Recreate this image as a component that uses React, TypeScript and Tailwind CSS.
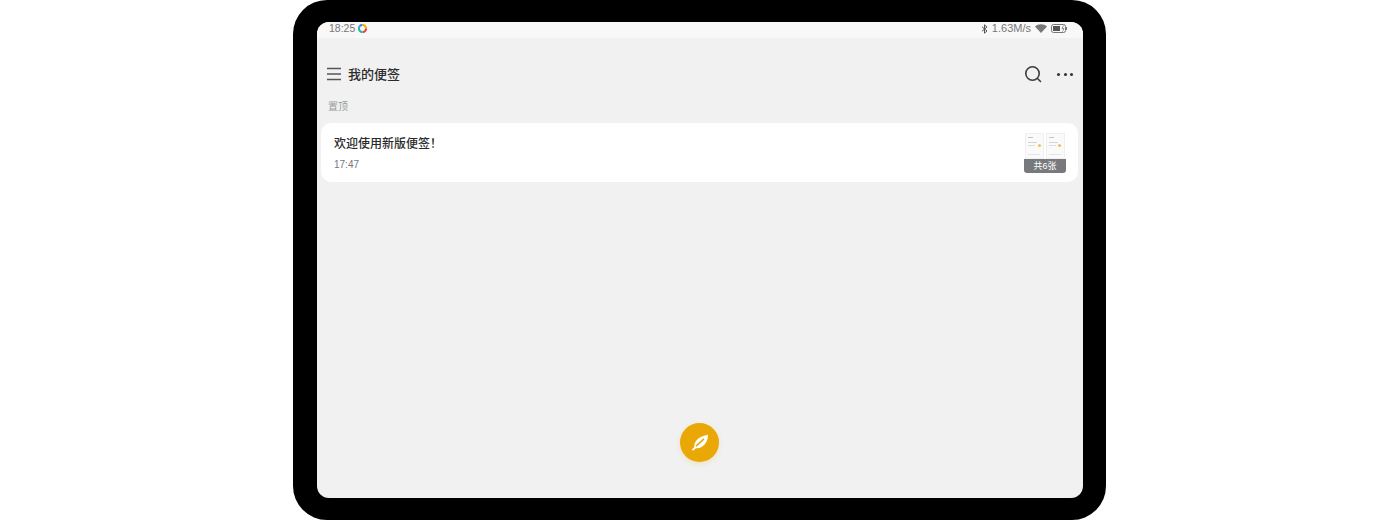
const cjk = "font-['Liberation_Sans','Noto_Sans_CJK_SC',sans-serif]";

const Thumb = ({ flip }: { flip?: boolean }) => (
  <div className="relative h-[26px] w-[19px] bg-[#fafafa] border border-[#f0f0f0]">
    <div className="absolute left-[2px] top-[3px] h-px w-[5px] bg-[#c4c4c4]" />
    <div className="absolute left-[2px] top-[8px] h-px w-[9px] bg-[#d4d4d4]" />
    <div className="absolute left-[2px] top-[11px] h-px w-[7px] bg-[#dcdcdc]" />
    <div className="absolute left-[2px] top-[20px] h-px w-[12px] bg-[#e4e4e4]" />
    <div className={`absolute top-[10px] h-[3px] w-[3px] rounded-full bg-[#e9c25f] ${flip ? "right-[3px]" : "right-[2px]"}`} />
  </div>
);

export default function App() {
  return (
    <div className={`flex h-[520px] w-full justify-start bg-white pl-[293px] ${cjk}`}>
      <div className="flex h-[520px] w-[813px] rounded-[34px] bg-black pb-[22px] pl-6 pr-[23px] pt-[22px]">
        <div className="relative flex flex-1 flex-col overflow-hidden rounded-xl bg-[#f1f1f1]">
          <div className="flex h-4 items-center justify-between bg-[#f8f8f8] pb-[3px] pl-3 pr-[14px] text-[10.5px] text-[#777]">
            <div className="flex items-center gap-[3px]">
              <span>18:25</span>
              <svg width="9" height="9" viewBox="0 0 10 10" fill="none" strokeWidth="2.4">
                <path d="M2 2.4A4 4 0 0 1 5 1" stroke="#3b82f6" />
                <path d="M5 1a4 4 0 0 1 4 4" stroke="#f4b400" />
                <path d="M9 5a4 4 0 0 1-4 4" stroke="#ea4335" />
                <path d="M5 9a4 4 0 0 1-4-4 4 4 0 0 1 1-2.6" stroke="#2ab7a9" />
              </svg>
            </div>
            <div className="flex items-center gap-[4px]">
              <svg width="7" height="10" viewBox="0 0 7 10" fill="none" stroke="#555" strokeWidth="1">
                <path d="M1 2.8 6 7 3.5 9.2V.8L6 3 1 7.2" />
              </svg>
              <span className="text-[11px]">1.63M/s</span>
              <svg width="12" height="9" viewBox="0 0 12 9" fill="#777">
                <path d="M0 2.6C3.4-.6 8.6-.6 12 2.6L6 9z" />
              </svg>
              <svg width="18" height="9" viewBox="0 0 18 9" fill="none">
                <rect x=".5" y=".5" width="14" height="8" rx="2" stroke="#777" />
                <rect x="2" y="2" width="7" height="5" fill="#555" />
                <path d="M15.5 3v3" stroke="#777" />
                <path d="M12.5 1.5 11 4.5h2L11.5 7.5" stroke="#777" strokeWidth=".8" />
              </svg>
            </div>
          </div>

          <div className="mt-[22px] flex h-7 items-center justify-between pl-[10px] pr-[10px]">
            <div className="flex items-center gap-[7px]">
              <svg width="14" height="14" viewBox="0 0 14 14" fill="none" stroke="#555" strokeWidth="1.4">
                <path d="M0 1.5h14M0 7h14M0 12.5h14" />
              </svg>
              <span className="text-[13px] font-medium leading-none text-[#2b2b2b]">我的便签</span>
            </div>
            <div className="flex items-center gap-[15px]">
              <svg width="18" height="18" viewBox="0 0 18 18" fill="none" stroke="#3d3d3d" strokeWidth="1.6">
                <circle cx="8.5" cy="8.5" r="6.7" />
                <path d="m13.5 13.5 3 3" strokeLinecap="round" />
              </svg>
              <div className="flex w-4 justify-between">
                <div className="h-[3px] w-[3px] rounded-full bg-[#333]" />
                <div className="h-[3px] w-[3px] rounded-full bg-[#333]" />
                <div className="h-[3px] w-[3px] rounded-full bg-[#333]" />
              </div>
            </div>
          </div>

          <div className="mt-[11px] pl-[11px] text-[10px] leading-[16px] text-[#9a9a9a]">置顶</div>

          <div className="ml-1 mr-[5px] mt-2 flex h-[59px] items-center justify-between rounded-[10px] bg-white pl-[13px] pr-3">
            <div className="flex translate-y-px flex-col gap-[6px]">
              <span className="text-[12px] font-medium leading-[16px] text-[#2a2a2a]">欢迎使用新版便签！</span>
              <span className="text-[10px] leading-[14px] text-[#777]">17:47</span>
            </div>
            <div className="mt-[10px] flex w-[42px] flex-col items-center self-start">
              <div className="flex w-full justify-between px-px">
                <Thumb />
                <Thumb flip />
              </div>
              <div className="h-[14px] w-full rounded-b-[3px] bg-[#77797d] text-center text-[9px] leading-[15px] text-white">共6张</div>
            </div>
          </div>

          <div className="absolute bottom-[36px] left-[363px] flex h-[39px] w-[39px] items-center justify-center rounded-full bg-[#eaa806] shadow-[0_2px_5px_rgba(234,168,6,0.18)]">
            <svg width="18" height="17" viewBox="0 0 18 17" fill="white">
              <path d="M.8 15.6 3.4 13C2.6 7.6 8 2 17 .8 17 9.4 11 15 5 14.2L2 16.8z" />
              <path d="M5.6 11.6 12.4 5.4" stroke="#eaa806" strokeWidth="1.6" fill="none" strokeLinecap="round" />
            </svg>
          </div>
        </div>
      </div>
    </div>
  );
}
